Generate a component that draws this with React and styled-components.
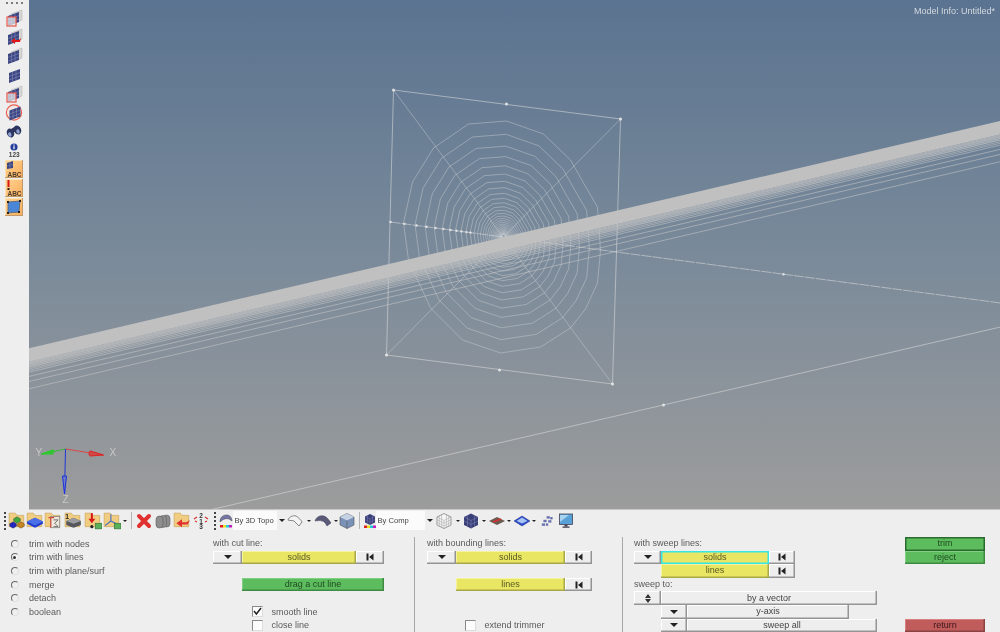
import React from "react";
import styled, { createGlobalStyle } from "styled-components";

const GlobalStyle = createGlobalStyle`
  html, body { margin: 0; padding: 0; background: #eeeeee; overflow: hidden; }
  body { font-family: "Liberation Sans", Arial, sans-serif; }
  svg { flex: none; }
`;

const Page = styled.div`
  width: 1000px;
  height: 632px;
  overflow: hidden;
  display: flex;
  flex-direction: column;
  background: #eeeeee;
  color: #5a5a5a;
  filter: blur(0.4px);
`;

const Top = styled.div`
  display: flex;
  height: 510px;
  flex: none;
`;

const Sidebar = styled.div`
  width: 28.5px;
  flex: none;
  display: flex;
  flex-direction: column;
  align-items: center;
  padding-top: 2px;
  box-sizing: border-box;
  background: #eeeeee;
`;

const Dots = styled.div`
  display: flex;
  gap: 3px;
  margin-bottom: 4.5px;
  & > i {
    width: 2px;
    height: 2px;
    background: #555;
    border-radius: 50%;
  }
`;

const SideIcon = styled.div`
  width: 20px;
  height: ${(p) => p.$h || 18.9}px;
  display: flex;
  align-items: center;
  justify-content: center;
  flex-direction: column;
`;

const Count = styled.span`
  font-size: 6.5px;
  line-height: 7px;
  font-weight: bold;
  color: #444;
`;

const OrangeBtn = styled.div`
  width: 18px;
  height: 18px;
  margin-bottom: 1px;
  background: linear-gradient(135deg, #ffd494, #f8ac58);
  box-shadow: inset -1px -1px 0 #c09a68, inset 1px 1px 0 #ffe2b5;
  display: flex;
  align-items: center;
  justify-content: center;
`;

const Viewport = styled.div`
  position: relative;
  flex: 1;
  background: linear-gradient(180deg, #5a7390 0%, #7a8a9a 50%, #9c9c9c 100%);
  border-bottom: 1px solid #c8c8c8;
  box-sizing: border-box;
  svg {
    display: block;
  }
`;

const ModelInfo = styled.span`
  position: absolute;
  top: 6px;
  right: 5px;
  font-size: 9px;
  color: #d4d8de;
`;

const Toolbar = styled.div`
  height: 24px;
  box-sizing: border-box;
  padding: 0 0 3px 2px;
  flex: none;
  display: flex;
  align-items: center;
`;

const Slot = styled.div`
  width: ${(p) => p.$w}px;
  flex: none;
  display: flex;
  align-items: center;
  justify-content: center;
`;

const Grip = styled.div`
  width: 2px;
  height: 18px;
  background: repeating-linear-gradient(180deg, #444 0 2px, transparent 2px 4px);
`;

const Sep = styled.div`
  width: 1px;
  height: 17px;
  background: #b5b5b5;
`;

const Caret = styled.div`
  width: 0;
  height: 0;
  border-left: ${(p) => p.$size || 2.5}px solid transparent;
  border-right: ${(p) => p.$size || 2.5}px solid transparent;
  border-top: ${(p) => p.$size || 2.5}px solid #222;
`;

const Combo = styled.div`
  width: ${(p) => p.$w}px;
  flex: none;
  display: flex;
  align-items: center;
  height: 19px;
`;

const ComboField = styled.div`
  flex: 1;
  min-width: 0;
  height: 100%;
  background: #fbfbfb;
  font-size: 7.6px;
  line-height: 19px;
  color: #444;
  padding-left: 1.5px;
  white-space: nowrap;
  overflow: hidden;
`;

const ComboArrow = styled.div`
  width: 9px;
  flex: none;
  height: 100%;
  display: flex;
  align-items: center;
  justify-content: center;
`;

const Panel = styled.div`
  flex: none;
  display: flex;
  padding-top: 3px;
  font-size: 9px;
`;

const Column = styled.div`
  flex: none;
  width: ${(p) => p.$w}px;
  box-sizing: border-box;
  padding-left: ${(p) => p.$pad || 0}px;
  border-left: ${(p) => (p.$rule ? "1px solid #a8a8a8" : "none")};
  display: grid;
  grid-template-columns: ${(p) => p.$cols};
  grid-auto-rows: 13.6px;
  height: 95.2px;
`;

const Label = styled.span`
  grid-row: ${(p) => p.$row};
  grid-column: 1 / -1;
  line-height: 13.6px;
  white-space: nowrap;
`;

const TONES = {
  plain: { bg: "#eeeeee", fg: "#444", hi: "#ffffff", lo: "#949494" },
  yellow: { bg: "#e8e662", fg: "#5a5a24", hi: "#f5f3a0", lo: "#a8a848" },
  green: { bg: "#5dbd5e", fg: "#1e4a20", hi: "#7fd080", lo: "#3f8a41" },
  red: { bg: "#c05c5c", fg: "#3a1818", hi: "#d88080", lo: "#8a4242" },
};

const Btn = styled.button`
  grid-row: ${(p) => p.$row};
  grid-column: ${(p) => p.$col};
  display: flex;
  align-items: center;
  justify-content: center;
  margin: 0;
  padding: 0;
  border: none;
  min-width: 0;
  font: inherit;
  line-height: 13px;
  background: ${(p) => TONES[p.$tone || "plain"].bg};
  color: ${(p) => TONES[p.$tone || "plain"].fg};
  box-shadow: ${(p) => {
    const t = TONES[p.$tone || "plain"];
    if (p.$focus) return "inset 0 0 0 1.5px #35e6e6";
    if (p.$pressed) return "inset 0 0 0 1.5px #2a6a2c";
    return `inset -1.5px -1.5px 0 ${t.lo}, inset 1px 1px 0 ${t.hi}`;
  }};
`;

const RadioRow = styled.label`
  grid-row: ${(p) => p.$row};
  display: flex;
  align-items: center;
  padding-left: 10.5px;
  gap: 10.5px;
  white-space: nowrap;
`;

const Radio = styled.span`
  position: relative;
  width: 6px;
  height: 6px;
  border-radius: 50%;
  border: 1px solid;
  border-color: #6a6a6a #e0e0e0 #e0e0e0 #6a6a6a;
  background: ${(p) => (p.$on ? "#f6f6f6" : "#efefef")};
  &::after {
    content: "";
    display: ${(p) => (p.$on ? "block" : "none")};
    position: absolute;
    left: 1.5px;
    top: 1.5px;
    width: 3px;
    height: 3px;
    border-radius: 50%;
    background: #333;
  }
`;

const CheckRow = styled.label`
  grid-row: ${(p) => p.$row};
  grid-column: 2 / -1;
  display: flex;
  align-items: center;
  gap: 8.5px;
  padding-left: ${(p) => p.$pad}px;
  white-space: nowrap;
`;

const Box = styled.span`
  width: 9px;
  height: 9px;
  flex: none;
  background: #fcfcfc;
  border: 1px solid;
  border-color: #8a8a8a #dddddd #dddddd #8a8a8a;
  display: flex;
  align-items: center;
  justify-content: center;
`;

/* ---------- icons ---------- */

const Svg = ({ w = 18, h = 18, vb = "0 0 18 18", children }) => (
  <svg width={w} height={h} viewBox={vb}>
    {children}
  </svg>
);

const SkipIcon = () => (
  <svg width="8" height="8" viewBox="0 0 8 8">
    <rect x="0.5" y="0.5" width="2" height="7" fill="#222" />
    <path d="M7.5 0.5v7L3 4z" fill="#222" />
  </svg>
);

const SpinIcon = () => (
  <svg width="6" height="9" viewBox="0 0 6 9">
    <path d="M3 0l3 4H0zM3 9L0 5h6z" fill="#333" />
  </svg>
);

const Check = () => (
  <svg width="9" height="9" viewBox="0 0 9 9">
    <path d="M1 4l2.4 3L8 1" fill="none" stroke="#222" strokeWidth="1.5" />
  </svg>
);

const PlateShape = ({ back, x = 0, y = 0 }) => (
  <g transform={`translate(${x} ${y})`}>
    {back && <path d="M6 5L17 1v10l-4 2z" fill="#d5d5d5" stroke="#b0b0b0" strokeWidth="0.5" />}
    <path d="M3 7l11-4v10L3 17z" fill="#3c4680" />
    <path d="M6.5 6v9.5M10 4.5v9.5M3 10.5l11-4M3 14l11-4" stroke="#8088b8" strokeWidth="0.6" />
  </g>
);

const PlateBox = () => (
  <Svg>
    <PlateShape back />
    <rect x="2" y="8" width="9" height="9" fill="#e8e8e8" fillOpacity="0.75" stroke="#e8574c" strokeWidth="1.2" />
  </Svg>
);

const PlateArrow = () => (
  <Svg>
    <PlateShape back />
    <path d="M16 10l-1 4-5 0v2l-4-3 4-3v2l4 0z" fill="#e01818" />
  </Svg>
);

const PlateBack = () => (
  <Svg>
    <PlateShape back />
  </Svg>
);

const PlateOnly = () => (
  <Svg>
    <PlateShape x={1} />
  </Svg>
);

const PlateRing = () => (
  <Svg>
    <circle cx="9" cy="9.5" r="7.6" fill="#f3e9e6" stroke="#e8604f" strokeWidth="1.2" />
    <PlateShape x={1.5} y={0.5} />
  </Svg>
);

const Binoculars = () => (
  <Svg>
    <g fill="#2c3560">
      <ellipse cx="5.5" cy="11" rx="3.6" ry="4.6" transform="rotate(-25 5.5 11)" />
      <ellipse cx="12.5" cy="8" rx="3.6" ry="4.6" transform="rotate(-25 12.5 8)" />
      <path d="M6 7l5-3 2 3-5 4z" />
    </g>
    <ellipse cx="4.8" cy="12.5" rx="1.6" ry="2.2" fill="#8fa0d0" transform="rotate(-25 4.8 12.5)" />
    <ellipse cx="13" cy="9.5" rx="1.6" ry="2.2" fill="#8fa0d0" transform="rotate(-25 13 9.5)" />
  </Svg>
);

const InfoDot = () => (
  <svg width="8" height="8" viewBox="0 0 8 8">
    <circle cx="4" cy="4" r="3.6" fill="#24409c" />
    <rect x="3.4" y="3.2" width="1.2" height="3" fill="#fff" />
    <rect x="3.4" y="1.5" width="1.2" height="1.1" fill="#fff" />
  </svg>
);

const AbcText = () => (
  <text x="9.5" y="16.5" fontSize="6.5" fontWeight="bold" textAnchor="middle" fill="#4a3a2a" fontFamily="Liberation Sans">
    ABC
  </text>
);

const AbcPlate = () => (
  <Svg>
    <path d="M2 3l6-2v7l-6 1z" fill="#3c4680" />
    <path d="M5 2v7M2 6l6-1.5" stroke="#8088b8" strokeWidth="0.5" />
    <AbcText />
  </Svg>
);

const AbcAlert = () => (
  <Svg>
    <rect x="2.5" y="1" width="2" height="7" fill="#d81818" />
    <rect x="2.5" y="9" width="2" height="2" fill="#222" />
    <AbcText />
  </Svg>
);

const SurfaceBtn = () => (
  <Svg>
    <path d="M3 4l12-1-1 11-11 1z" fill="#4a86d8" stroke="#55606e" strokeWidth="0.8" />
    <g fill="#222">
      <rect x="2" y="3" width="2" height="2" />
      <rect x="14" y="2" width="2" height="2" />
      <rect x="2" y="14" width="2" height="2" />
      <rect x="13" y="13" width="2" height="2" />
    </g>
  </Svg>
);

const Folder = ({ children }) => (
  <Svg vb="1 2 16 16">
    <path d="M2 3h5.5l1.5 2h6v10H2z" fill="#f0cd80" stroke="#cca458" strokeWidth="0.6" />
    {children}
  </Svg>
);

const Cube = ({ x, y, c, s = 3 }) => (
  <path
    d={`M${x - s} ${y}l${s} -${s * 0.6} ${s} ${s * 0.6}v${s * 0.7}l-${s} ${s * 0.6} -${s} -${s * 0.6}z`}
    fill={c}
    stroke="#222"
    strokeWidth="0.3"
  />
);

const FolderBlocks = () => (
  <Folder>
    <Cube x={9} y={8} c="#3ea83e" />
    <Cube x={5.5} y={12.5} c="#2028c0" />
    <Cube x={12.5} y={12.5} c="#c88420" />
  </Folder>
);

const FolderDiamond = () => (
  <Folder>
    <path d="M9 7l7 3.5v2L9 16l-7-3.5v-2z" fill="#1e3ad0" />
    <path d="M9 7l7 3.5L9 14l-7-3.5z" fill="#4a70e8" />
  </Folder>
);

const FolderFrame = () => (
  <Folder>
    <rect x="7" y="6" width="8" height="10" fill="#ece6dc" stroke="#777" strokeWidth="0.6" />
    <path d="M5 7h5M7 7v9" stroke="#d84a3a" strokeWidth="1" />
    <path d="M9.5 9h4l-3 3 3 3h-4" fill="none" stroke="#666" strokeWidth="0.8" />
  </Folder>
);

const FolderBox = () => (
  <Folder>
    <text x="2" y="8" fontSize="6" fontWeight="bold" fill="#222" fontFamily="Liberation Sans">1</text>
    <path d="M9.5 7l6.5 3v3.5L9.5 16 3 13.5V10z" fill="#55575c" />
    <path d="M9.5 7l6.5 3-6.5 2.5L3 10z" fill="#9a9ca0" />
  </Folder>
);

const FolderDown = () => (
  <Folder>
    <path d="M8 3v6" stroke="#d81818" strokeWidth="1.8" />
    <path d="M5 8h6l-3 4z" fill="#d81818" />
    <circle cx="8" cy="15" r="1.4" fill="#222" />
    <rect x="11" y="12" width="6" height="5" fill="#58b058" stroke="#2f6a2f" strokeWidth="0.5" />
  </Folder>
);

const FolderAxis = () => (
  <Folder>
    <path d="M8 4v6l-5 4M8 10l6 3" fill="none" stroke="#4a70c0" strokeWidth="1" />
    <rect x="11" y="12" width="6" height="5" fill="#58b058" stroke="#2f6a2f" strokeWidth="0.5" />
  </Folder>
);

const RedCross = () => (
  <Svg>
    <path d="M4 4l10 10M14 4L4 14" stroke="#e03030" strokeWidth="4" strokeLinecap="round" />
  </Svg>
);

const Cylinders = () => (
  <Svg>
    <g fill="#8e8e8e" stroke="#5c5c5c" strokeWidth="0.6">
      <rect x="9" y="3" width="7" height="12" rx="3.5" />
      <rect x="5.5" y="3.5" width="7" height="12" rx="3.5" />
      <rect x="2" y="4" width="7" height="12" rx="3.5" />
    </g>
  </Svg>
);

const FolderBack = () => (
  <Folder>
    <path d="M16 9l-2 4H9v2.5L4 12l5-3.5V11h4z" fill="#e03030" />
  </Folder>
);

const Numbered = () => (
  <Svg>
    <g fontSize="6.5" fontWeight="bold" fill="#333" fontFamily="Liberation Sans" textAnchor="middle">
      <text x="9" y="6">2</text>
      <text x="9" y="11.5">1</text>
      <text x="9" y="17">3</text>
    </g>
    <path d="M2 7l3-2M3 9l2 1M16 7l-3-2M15 9l-2 1" stroke="#d83030" strokeWidth="1.2" />
  </Svg>
);

const Swatches = ({ y, x = 1, s = 3 }) => (
  <g>
    {["#e02020", "#e8e020", "#20c8d8", "#c020c0"].map((c, i) => (
      <rect key={c} x={x + i * s} y={y} width={s} height="2.5" fill={c} />
    ))}
  </g>
);

const TopoIcon = () => (
  <Svg w={14} h={16} vb="0 0 14 16">
    <path d="M1 9c0-5 3-7 7-7 3 0 5 3 5 6l-3-2c-3-1-6 0-9 3z" fill="#7676a8" stroke="#444" strokeWidth="0.5" />
    <Swatches y={12} />
  </Svg>
);

const CompIcon = () => (
  <Svg w={12} h={16} vb="0 0 12 16">
    <path d="M6 1l5 2.5v6L6 12 1 9.5v-6z" fill="#3a3f78" />
    <path d="M6 6v6M1 3.5L6 6l5-2.5M1 6.5L6 9l5-2.5M3.5 2.5v8M8.5 2.5v8" stroke="#8088b8" strokeWidth="0.4" fill="none" />
    <Swatches y={12.5} x={0} />
  </Svg>
);

const OutlineShape = () => (
  <Svg>
    <path d="M2 8c1-3 5-5 8-4 2 1 5 4 6 6l-3 4-5-5c-2-1-4 0-6-1z" fill="#f4f4f4" stroke="#777" strokeWidth="0.9" />
  </Svg>
);

const FilledShape = () => (
  <Svg>
    <path d="M1 9c1-4 5-6 9-5 3 1 5 4 7 7l-4 3c-1-2-3-5-5-5-3-1-5 0-7 0z" fill="#5a5a78" stroke="#40405a" strokeWidth="0.5" />
  </Svg>
);

const GlassCube = () => (
  <Svg>
    <path d="M9 1.5l7 3.5v8l-7 3.5L2 13V5z" fill="#7a92b8" stroke="#555" strokeWidth="0.6" />
    <path d="M9 1.5l7 3.5-7 3.5L2 5z" fill="#c4d2e4" />
    <path d="M9 8.5v8" stroke="#555" strokeWidth="0.6" />
  </Svg>
);

const WireCube = () => (
  <Svg>
    <path d="M9 1.5l7 3.5v8l-7 3.5L2 13V5z" fill="#f6f6f6" stroke="#777" strokeWidth="0.7" />
    <path d="M9 8.5v8M2 5l7 3.5L16 5M2 7.7l7 3.5 7-3.5M2 10.4l7 3.5 7-3.5M4.3 3.8v10.5M6.6 2.7v12.8M11.4 2.7v12.8M13.7 3.8v10.5" stroke="#999" strokeWidth="0.45" fill="none" />
  </Svg>
);

const SolidCube = () => (
  <Svg>
    <path d="M9 1.5l7 3.5v8l-7 3.5L2 13V5z" fill="#3a3f78" />
    <path d="M9 8.5v8M2 5l7 3.5L16 5M2 9l7 3.5L16 9M5.5 3.2v11.5M12.5 3.2v11.5" stroke="#8088b8" strokeWidth="0.5" fill="none" />
  </Svg>
);

const PlateFlat = () => (
  <Svg>
    <path d="M9 5l8 4-8 4-8-4z" fill="#6a5a50" />
    <path d="M5 10l8-3" stroke="#d83030" strokeWidth="1.4" />
  </Svg>
);

const BlueDiamond = () => (
  <Svg>
    <path d="M9 4l8 5-8 5-8-5z" fill="#2848c8" stroke="#203088" strokeWidth="0.5" />
    <path d="M9 5.5l5.5 3.5L9 11.5 3.5 9z" fill="#a8c4f0" />
  </Svg>
);

const Squares = () => (
  <Svg w={12} h={14} vb="2 2 15 14">
    <g fill="#6a72b0">
      <rect x="9" y="3" width="4" height="3" />
      <rect x="13.5" y="4" width="3" height="3" />
      <rect x="5" y="7.5" width="4" height="3" />
      <rect x="11" y="8" width="4" height="3" />
      <rect x="3" y="12" width="4" height="3" />
      <rect x="8" y="12" width="3" height="3" />
    </g>
  </Svg>
);

const Monitor = () => (
  <Svg>
    <rect x="2.5" y="2" width="13" height="10.5" fill="#58a0d8" stroke="#445" strokeWidth="0.8" />
    <path d="M3 3h9l-9 7z" fill="#a8d4f0" />
    <rect x="7.5" y="12.5" width="3" height="2" fill="#445" />
    <rect x="5.5" y="14.5" width="7" height="1.2" fill="#334" />
  </Svg>
);

/* ---------- model view ---------- */

const CENTER = [503, 237];
const OUTER = [
  [506, 121], [543, 134], [570, 160], [583, 183], [597, 207], [600, 250], [597, 283], [585, 309],
  [570, 328], [540, 347], [500, 353], [462, 340], [430, 308], [408, 260], [403, 223], [412, 182],
  [433, 148], [468, 124],
];
const RINGS = Array.from({ length: 34 }, (_, k) => Math.pow(0.885, k));
const BAR_OFFSETS = [14, 15, 16, 17.3, 18.8, 20.7, 22.2, 24, 28.3, 33.3, 40.6];
const BAR_SLOPE = 0.2338;
const barY = (x) => 121 + (1000 - x) * BAR_SLOPE;
const AXIS_NODES = [390, 404, 416, 426, 435, 443, 450, 456, 461, 466, 470, 783];
const CORNERS = [[393, 90], [620, 119], [612, 384], [386, 355], [506, 104], [499, 370], [663, 405]];
const LEFT = 28.5;

const ring = (s) =>
  OUTER.map(([x, y]) => `${CENTER[0] + (x - CENTER[0]) * s},${CENTER[1] + (y - CENTER[1]) * s}`).join(" ");

const ModelView = () => (
  <svg width="971.5" height="509" viewBox="28.5 0 971.5 509">
    <g fill="none" stroke="#d4d6d8" strokeWidth="0.7" strokeOpacity="0.6">
      {RINGS.map((s) => (
        <polygon key={s} points={ring(s)} />
      ))}
      <path d="M393 90L612 384M620 119L386 355" />
    </g>
    <g fill="none" stroke="#dcdcdc" strokeWidth="0.8" strokeOpacity="0.7">
      <path d="M393 90L620 119L612 384L386 355Z" />
      <path d="M209 510L1000 327" />
      <path d="M390 222L1000 303" strokeDasharray="10 1" />
    </g>
    <polygon points={`${LEFT},${barY(LEFT)} 1000,121 1000,134.5 ${LEFT},${barY(LEFT) + 13.5}`} fill="#c0c0c0" />
    <polygon points={`${LEFT},${barY(LEFT) + 13.5} 1000,134.5 1000,141 ${LEFT},${barY(LEFT) + 20}`} fill="#bdbdbd" fillOpacity="0.4" />
    <g stroke="#c8c8c8" strokeWidth="0.8" strokeOpacity="0.7">
      {BAR_OFFSETS.map((d) => (
        <line key={d} x1={LEFT} y1={barY(LEFT) + d} x2="1000" y2={121 + d} />
      ))}
    </g>
    <g fill="#e2e2e2">
      {CORNERS.map(([x, y]) => (
        <circle key={x} cx={x} cy={y} r="1.5" />
      ))}
      {AXIS_NODES.map((x) => (
        <circle key={x} cx={x} cy={237 + (x - 503) * 0.133} r="1.2" />
      ))}
    </g>
    <g fill="none" strokeWidth="1">
      <path d="M65 449L103 455" stroke="#d84848" />
      <path d="M90 451l13 4-13 1c-2 0-2-5 0-5z" stroke="#e02020" fill="#d04848" />
      <path d="M65 449L41 454" stroke="#38b838" />
      <path d="M52 450l-11 4 11 0c2-1 2-4 0-4z" stroke="#20d020" fill="#38c038" />
      <path d="M65 449L64 494" stroke="#2038d8" />
      <path d="M62 476l2 18 2-18z" stroke="#1830e0" fill="#7080c0" />
    </g>
    <g fontSize="10" fill="#c8c8c8" fontFamily="Liberation Sans">
      <text x="109" y="456">X</text>
      <text x="35" y="456">Y</text>
      <text x="62" y="503">Z</text>
    </g>
  </svg>
);

const TOOLS = [
  [6, <Grip />],
  [18, <FolderBlocks />],
  [18, <FolderDiamond />],
  [18, <FolderFrame />],
  [22, <FolderBox />],
  [18, <FolderDown />],
  [19, <FolderAxis />],
  [7, <Caret />],
  [7, <Sep />],
  [18, <RedCross />],
  [19, <Cylinders />],
  [19, <FolderBack />],
  [19, <Numbered />],
  [9, <Grip />],
];

const TOOLS_MID = [
  [18, <OutlineShape />],
  [10, <Caret />],
  [18, <FilledShape />],
  [7, <Caret />],
  [15, <GlassCube />],
  [10, <Sep />],
];

const TOOLS_END = [
  [20, <WireCube />],
  [8, <Caret />],
  [17, <SolidCube />],
  [9, <Caret />],
  [17, <PlateFlat />],
  [8, <Caret />],
  [17, <BlueDiamond />],
  [8, <Caret />],
  [17, <Squares />],
  [22, <Monitor />],
];

const renderTools = (list) =>
  list.map(([w, node], i) => (
    <Slot key={i} $w={w}>
      {node}
    </Slot>
  ));

const RADIOS = ["trim with nodes", "trim with lines", "trim with plane/surf", "merge", "detach", "boolean"];

const App = () => (
  <Page>
    <GlobalStyle />
    <Top>
      <Sidebar>
        <Dots>
          <i />
          <i />
          <i />
          <i />
        </Dots>
        <SideIcon><PlateBox /></SideIcon>
        <SideIcon><PlateArrow /></SideIcon>
        <SideIcon><PlateBack /></SideIcon>
        <SideIcon><PlateOnly /></SideIcon>
        <SideIcon><PlateBox /></SideIcon>
        <SideIcon><PlateRing /></SideIcon>
        <SideIcon><Binoculars /></SideIcon>
        <SideIcon $h={19}>
          <InfoDot />
          <Count>123</Count>
        </SideIcon>
        <OrangeBtn><AbcPlate /></OrangeBtn>
        <OrangeBtn><AbcAlert /></OrangeBtn>
        <OrangeBtn><SurfaceBtn /></OrangeBtn>
      </Sidebar>
      <Viewport>
        <ModelView />
        <ModelInfo>Model Info: Untitled*</ModelInfo>
      </Viewport>
    </Top>

    <Toolbar>
      {renderTools(TOOLS)}
      <Combo $w={67}>
        <TopoIcon />
        <ComboField>By 3D Topo</ComboField>
        <ComboArrow><Caret $size={3} /></ComboArrow>
      </Combo>
      {renderTools(TOOLS_MID)}
      <Combo $w={70}>
        <CompIcon />
        <ComboField>By Comp</ComboField>
        <ComboArrow><Caret $size={3} /></ComboArrow>
      </Combo>
      {renderTools(TOOLS_END)}
    </Toolbar>

    <Panel>
      <Column $w={213} $cols="1fr">
        {RADIOS.map((text, i) => (
          <RadioRow key={text} $row={i + 1}>
            <Radio $on={i === 1} />
            {text}
          </RadioRow>
        ))}
      </Column>

      <Column $w={201} $cols="29px 114px 28px">
        <Label $row={1}>with cut line:</Label>
        <Btn $row={2} $col="1"><Caret $size={4} /></Btn>
        <Btn $row={2} $col="2" $tone="yellow">solids</Btn>
        <Btn $row={2} $col="3"><SkipIcon /></Btn>
        <Btn $row={4} $col="2 / 4" $tone="green">drag a cut line</Btn>
        <CheckRow $row={6} $pad={10}>
          <Box><Check /></Box>
          smooth line
        </CheckRow>
        <CheckRow $row={7} $pad={10}>
          <Box />
          close line
        </CheckRow>
      </Column>

      <Column $w={208} $rule $pad={12} $cols="29px 109px 27px">
        <Label $row={1}>with bounding lines:</Label>
        <Btn $row={2} $col="1"><Caret $size={4} /></Btn>
        <Btn $row={2} $col="2" $tone="yellow">solids</Btn>
        <Btn $row={2} $col="3"><SkipIcon /></Btn>
        <Btn $row={4} $col="2" $tone="yellow">lines</Btn>
        <Btn $row={4} $col="3"><SkipIcon /></Btn>
        <CheckRow $row={7} $pad={9}>
          <Box />
          extend trimmer
        </CheckRow>
      </Column>

      <Column $w={283} $rule $pad={11} $cols="27px 26px 82px 26px 54px 28px">
        <Label $row={1}>with sweep lines:</Label>
        <Btn $row={2} $col="1"><Caret $size={4} /></Btn>
        <Btn $row={2} $col="2 / 4" $tone="yellow" $focus>solids</Btn>
        <Btn $row={2} $col="4"><SkipIcon /></Btn>
        <Btn $row={3} $col="2 / 4" $tone="yellow">lines</Btn>
        <Btn $row={3} $col="4"><SkipIcon /></Btn>
        <Label $row={4}>sweep to:</Label>
        <Btn $row={5} $col="1"><SpinIcon /></Btn>
        <Btn $row={5} $col="2 / 7">by a vector</Btn>
        <Btn $row={6} $col="2"><Caret $size={4} /></Btn>
        <Btn $row={6} $col="3 / 6">y-axis</Btn>
        <Btn $row={7} $col="2"><Caret $size={4} /></Btn>
        <Btn $row={7} $col="3 / 7">sweep all</Btn>
      </Column>

      <Column $w={80} $cols="1fr">
        <Btn $row={1} $col="1" $tone="green" $pressed>trim</Btn>
        <Btn $row={2} $col="1" $tone="green">reject</Btn>
        <Btn $row={7} $col="1" $tone="red">return</Btn>
      </Column>
    </Panel>
  </Page>
);

export default App;
